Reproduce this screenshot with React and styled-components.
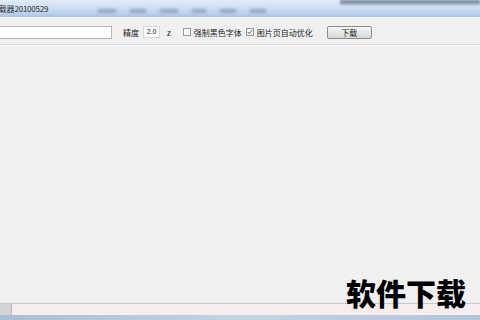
import React from "react";
import styled, { createGlobalStyle } from "styled-components";

const Global = createGlobalStyle`
  html, body { margin: 0; padding: 0; background: #f0f0f0; }
  body { width: 480px; height: 320px; overflow: hidden; font-family: "Noto Sans CJK SC", "Liberation Sans", sans-serif; }
  #root { width: 480px; height: 320px; }
`;

const Window = styled.div`
  width: 480px;
  height: 320px;
  display: flex;
  flex-direction: column;
  background: #f0f0f0;
  position: relative;
  overflow: hidden;
`;

const TitleBar = styled.div`
  height: 17px;
  flex: none;
  display: flex;
  align-items: center;
  background: linear-gradient(180deg, #e2ecf8 0%, #cddff3 45%, #bad1ec 80%, #a9c3e3 100%);
  position: relative;
  overflow: hidden;
`;

const Title = styled.span`
  font-size: 8px;
  color: #2b2b2b;
  margin-left: -9px;
  white-space: nowrap;
  letter-spacing: -0.2px;
  flex: none;
`;

const BlurMenu = styled.div`
  display: flex;
  gap: 14px;
  margin-left: 50px;
  margin-top: 4px;
  filter: blur(1.4px);
`;

const BlurItem = styled.span`
  width: ${(p) => p.w}px;
  height: 4px;
  background: #5b6f8c;
  opacity: 0.45;
`;

const DarkStrip = styled.div`
  position: absolute;
  top: 0;
  left: 340px;
  right: 0;
  height: 5px;
  background: linear-gradient(180deg, #6d7a8a, #a7b8cf);
  filter: blur(1px);
`;

const Toolbar = styled.div`
  height: 28px;
  padding-top: 3px;
  box-sizing: border-box;
  flex: none;
  display: flex;
  align-items: center;
  background: #f0f0f0;
  border-bottom: 1px solid #dcdcdc;
  font-size: 8px;
  color: #222;
`;

const UrlInput = styled.div`
  width: 116px;
  height: 13px;
  margin-left: -4px;
  background: #fff;
  border: 1px solid #b0b6be;
  box-sizing: border-box;
`;

const Label = styled.span`
  margin-left: ${(p) => p.ml || 0}px;
  white-space: nowrap;
`;

const SmallInput = styled.div`
  width: 17px;
  height: 12px;
  margin-left: 4px;
  background: #fff;
  border: 1px solid #d8d8d8;
  box-sizing: border-box;
  font-size: 7px;
  line-height: 10px;
  text-align: center;
  font-family: "Liberation Sans", sans-serif;
`;

const Check = styled.span`
  width: 8px;
  height: 8px;
  margin-left: ${(p) => p.ml}px;
  border: 1px solid #9a9a9a;
  background: #fafafa;
  display: inline-flex;
  align-items: center;
  justify-content: center;
  box-sizing: border-box;
  margin-right: 3px;
`;

const Button = styled.div`
  width: 45px;
  height: 13px;
  margin-left: 14px;
  border: 1px solid #8d8d8d;
  border-radius: 2px;
  background: linear-gradient(180deg, #f8f8f8 0%, #e6e6e6 50%, #d8d8d8 100%);
  box-sizing: border-box;
  display: flex;
  align-items: center;
  justify-content: center;
  font-size: 8px;
`;

const Body = styled.div`
  flex: 1;
  background: #f0f0f0;
  border-top: 1px solid #f7f7f7;
`;

const StatusBar = styled.div`
  height: 11px;
  flex: none;
  display: flex;
  border-top: 1px solid #c9c9c9;
  background: #f6eeee;
`;

const Grip = styled.div`
  width: 11px;
  background: #d4d4d4;
  border-right: 1px solid #b8b8b8;
`;

const BottomStrip = styled.div`
  height: 5px;
  flex: none;
  background: linear-gradient(90deg, #a9bdd4, #c4d3e4, #b3c5da);
`;

const Watermark = styled.div`
  position: absolute;
  left: 346px;
  top: 273px;
  font-size: 30px;
  font-weight: 900;
  color: #000;
  font-family: "Noto Sans CJK SC", sans-serif;
  line-height: 38px;
`;

export default function App() {
  return (
    <>
      <Global />
      <Window>
        <TitleBar>
          <Title>下载器20100529</Title>
          <BlurMenu>
            <BlurItem w={18} />
            <BlurItem w={16} />
            <BlurItem w={18} />
            <BlurItem w={14} />
            <BlurItem w={16} />
            <BlurItem w={16} />
          </BlurMenu>
          <DarkStrip />
        </TitleBar>
        <Toolbar>
          <UrlInput />
          <Label ml={11}>精度</Label>
          <SmallInput>2.0</SmallInput>
          <Label ml={7}>z</Label>
          <Check ml={12} />
          <Label>强制黑色字体</Label>
          <Check ml={4}>
            <svg width="6" height="6" viewBox="0 0 6 6">
              <path d="M0.8 3 L2.4 4.6 L5.2 1.2" stroke="#555" strokeWidth="1" fill="none" />
            </svg>
          </Check>
          <Label>图片页自动优化</Label>
          <Button>下载</Button>
        </Toolbar>
        <Body />
        <StatusBar>
          <Grip />
        </StatusBar>
        <BottomStrip />
        <Watermark>软件下载</Watermark>
      </Window>
    </>
  );
}
